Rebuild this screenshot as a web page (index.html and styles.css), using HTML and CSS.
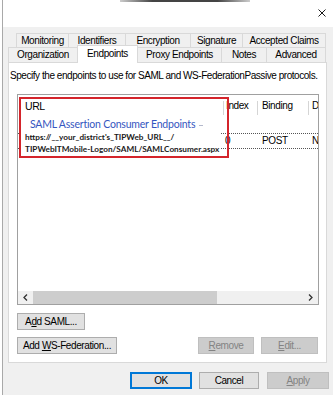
FILE: index.html
```html
<!DOCTYPE html>
<html>
<head>
    <title>Relying Party Properties</title>
    <meta charset="UTF-8">
    <meta name="viewport" content="width=device-width, initial-scale=1.0">
    <link rel="stylesheet" href="styles.css">
</head>
<body>
<div class="window">
    <div class="titlebar">
        <div class="titlebar-strip"></div>
        <svg class="close" width="8" height="8" viewBox="0 0 8 8">
            <path d="M0.5 0.5 L7.5 7.5 M7.5 0.5 L0.5 7.5" stroke="#1a1a1a" stroke-width="1" fill="none"/>
        </svg>
    </div>
    <div class="content">
        <div class="tab-row back">
            <div class="tab w-mon">Monitoring</div>
            <div class="tab w-ident">Identifiers</div>
            <div class="tab w-enc">Encryption</div>
            <div class="tab w-sig">Signature</div>
            <div class="tab w-claims">Accepted Claims</div>
        </div>
        <div class="tab-row front">
            <div class="tab w-org">Organization</div>
            <div class="tab w-end selected">Endpoints</div>
            <div class="tab w-proxy">Proxy Endpoints</div>
            <div class="tab w-notes">Notes</div>
            <div class="tab w-adv">Advanced</div>
        </div>
        <div class="panel">
            <p class="hint">Specify the endpoints to use for SAML and WS-FederationPassive protocols.</p>
            <div class="list">
                <div class="list-head">
                    <!-- URL header sits under the pasted callout -->
                    <div class="col col-url"></div>
                    <div class="col col-index sep">Index</div>
                    <div class="col col-binding sep">Binding</div>
                    <div class="col col-d sep">D</div>
                </div>
                <div class="list-body">
                    <div class="row">
                        <div class="col col-url"></div>
                        <div class="col col-index">0</div>
                        <div class="col col-binding">POST</div>
                        <div class="col col-d">N</div>
                    </div>
                </div>
                <div class="hscroll">
                    <div class="arrow">
                        <svg width="5" height="7" viewBox="0 0 5 7"><path d="M4 0.5 L1 3.5 L4 6.5" stroke="#333" stroke-width="1.3" fill="none"/></svg>
                    </div>
                    <div class="thumb"></div>
                    <div class="track"></div>
                    <div class="arrow">
                        <svg width="5" height="7" viewBox="0 0 5 7"><path d="M1 0.5 L4 3.5 L1 6.5" stroke="#333" stroke-width="1.3" fill="none"/></svg>
                    </div>
                </div>
                <!-- annotation pasted over the list -->
                <div class="callout">
                    <div class="paste">
                        <div class="paste-url">URL</div>
                        <div class="paste-group"><span>SAML Assertion Consumer Endpoints</span><span class="group-line"></span></div>
                        <div class="paste-link">https://__your_district's_TIPWeb_URL__/</div>
                        <div class="paste-link">TIPWebITMobile-Logon/SAML/SAMLConsumer.aspx</div>
                    </div>
                </div>
            </div>
            <div class="btn-row first">
                <button class="btn w-addsaml">A<u>d</u>d SAML...</button>
            </div>
            <div class="btn-row">
                <button class="btn w-addws">Add <u>W</u>S-Federation...</button>
                <div class="spacer"></div>
                <button class="btn disabled w-remove"><u>R</u>emove</button>
                <button class="btn disabled w-edit"><u>E</u>dit...</button>
            </div>
        </div>
        <div class="footer">
            <button class="btn default w-ok">OK</button>
            <button class="btn w-cancel">Cancel</button>
            <button class="btn disabled w-apply"><u>A</u>pply</button>
        </div>
    </div>
</div>
</body>
</html>
```

FILE: styles.css
```css
* {
    box-sizing: border-box;
}

body {
    margin: 0;
    background-color: #fff;
    color: #000;
    font-family: "Liberation Sans", Arial, sans-serif;
    font-size: 10px;
    letter-spacing: -0.4px;
}

.window {
    width: 331px;
    height: 395px;
    margin-left: 2px;
    border-left: 1px solid #a9a9a9;
    display: flex;
    flex-direction: column;
    overflow: hidden;
}

.titlebar {
    height: 27px;
    background-color: #fff;
    display: flex;
    flex-direction: column;
}

.titlebar-strip {
    width: 130px;
    height: 2px;
    margin-left: 117px;
    background: linear-gradient(90deg, #ccc, #444 25%, #444 75%, #ccc);
}

.close {
    align-self: flex-end;
    margin: 7px 7px 0 0;
}

.content {
    flex: 1;
    background-color: #f0f0f0;
    padding: 6px 4px 0 5px;
}

/* tabs */
.tab-row {
    display: flex;
    margin-right: 2px;
}

.tab-row.back {
    height: 14px;
    margin-left: 8px;
}

.tab-row.front {
    height: 15px;
}

.tab {
    border: 1px solid #d9d9d9;
    border-right: 0;
    border-bottom: 0;
    background-color: #f0f0f0;
    text-align: center;
    line-height: 13px;
    white-space: nowrap;
}

.tab-row.front .tab {
    line-height: 14px;
}

.tab:last-child {
    border-right: 1px solid #d9d9d9;
}

.tab.selected {
    position: relative;
    z-index: 1;
    height: 18px;
    margin-top: -2px;
    padding-top: 1px;
    background-color: #fff;
    border-right: 1px solid #d9d9d9;
}

.tab.selected + .tab {
    border-left: 0;
}

.w-mon { width: 52px; }
.w-ident { width: 57px; }
.w-enc { width: 65px; }
.w-sig { width: 52px; }
.w-claims { width: 84px; }
.w-org { width: 69px; }
.w-end { width: 61px; }
.w-proxy { width: 83px; }
.w-notes { width: 45px; }
.w-adv { width: 60px; }

/* tab page */
.panel {
    height: 301px;
    margin-right: 2px;
    border: 1px solid #d9d9d9;
    background-color: #fff;
    display: flex;
    flex-direction: column;
}

.hint {
    margin: 0;
    padding: 6px 0 0 1px;
    line-height: 13px;
    letter-spacing: -0.45px;
    white-space: nowrap;
}

.list {
    position: relative;
    height: 211px;
    margin: 12px 7px 0 8px;
    border: 1px solid #a0a0a0;
    background-color: #fff;
    display: flex;
    flex-direction: column;
}

.list-head {
    display: flex;
    height: 22px;
    line-height: 22px;
}

.col {
    white-space: nowrap;
    overflow: hidden;
}

.col-url {
    width: 205px;
    padding-left: 6px;
}

.col-index {
    width: 34px;
    padding-left: 2px;
}

.col-binding {
    width: 51px;
    padding-left: 5px;
}

.col-d {
    flex: 1;
    padding-left: 4px;
}

.list-head .col-index {
    padding-left: 3px;
}

.sep {
    background: linear-gradient(#d5d5d5, #d5d5d5) left 6px / 1px 14px no-repeat;
}

.list-body {
    flex: 1;
    padding-top: 16px;
}

.row {
    display: flex;
    height: 16px;
    line-height: 14px;
    border-top: 1px dotted #555;
    border-bottom: 1px dotted #555;
}

.hscroll {
    height: 13px;
    display: flex;
    background-color: #f0f0f0;
}

.arrow {
    width: 15px;
    display: flex;
    align-items: center;
    justify-content: center;
}

.thumb {
    width: 184px;
    background-color: #cdcdcd;
}

.track {
    flex: 1;
}

/* red annotation box */
.callout {
    position: absolute;
    left: 1px;
    top: 2px;
    width: 210px;
    height: 61px;
    border: 2px solid #d4242b;
}

.paste {
    width: 200px;
    height: 100%;
    overflow: hidden;
    background-color: #fff;
    padding: 1px 0 0 4px;
}

.paste-url {
    line-height: 13px;
    font-size: 10.5px;
}

.paste-group {
    display: flex;
    align-items: center;
    margin-top: 5px;
    padding-left: 5px;
    line-height: 13px;
    color: #3556c0;
    font-family: Lato, "Liberation Sans", sans-serif;
    font-size: 10.5px;
    letter-spacing: -0.2px;
    white-space: nowrap;
}

.group-line {
    flex: 1;
    height: 1px;
    margin: 1px 18px 0 4px;
    background-color: #b4b9cc;
}

.paste-link {
    line-height: 12px;
    font-family: Lato, "Liberation Sans", sans-serif;
    font-size: 8.2px;
    font-weight: bold;
    letter-spacing: 0;
    color: #1a1a1a;
    white-space: nowrap;
}

/* buttons */
.btn-row {
    display: flex;
    gap: 7px;
    margin: 7px 8px 0 8px;
}

.btn-row.first {
    margin-top: 8px;
}

.spacer {
    flex: 1;
}

.btn {
    height: 17px;
    padding: 0;
    border: 1px solid #adadad;
    background-color: #e1e1e1;
    color: #000;
    font: inherit;
    letter-spacing: inherit;
    line-height: 15px;
    text-align: center;
    white-space: nowrap;
}

.btn.disabled {
    background-color: #cccccc;
    border-color: #bfbfbf;
    color: #838383;
}

.btn.default {
    border-color: #0078d7;
    box-shadow: inset 0 0 0 1px #0078d7;
}

.w-addsaml { width: 68px; }
.w-addws { width: 100px; }
.w-remove { width: 56px; }
.w-edit { width: 57px; }
.w-ok { width: 62px; }
.w-cancel { width: 60px; }
.w-apply { width: 62px; }

.footer {
    display: flex;
    justify-content: flex-end;
    gap: 7px;
    padding-top: 9px;
}

.footer .w-apply {
    margin-left: 1px;
}
```
